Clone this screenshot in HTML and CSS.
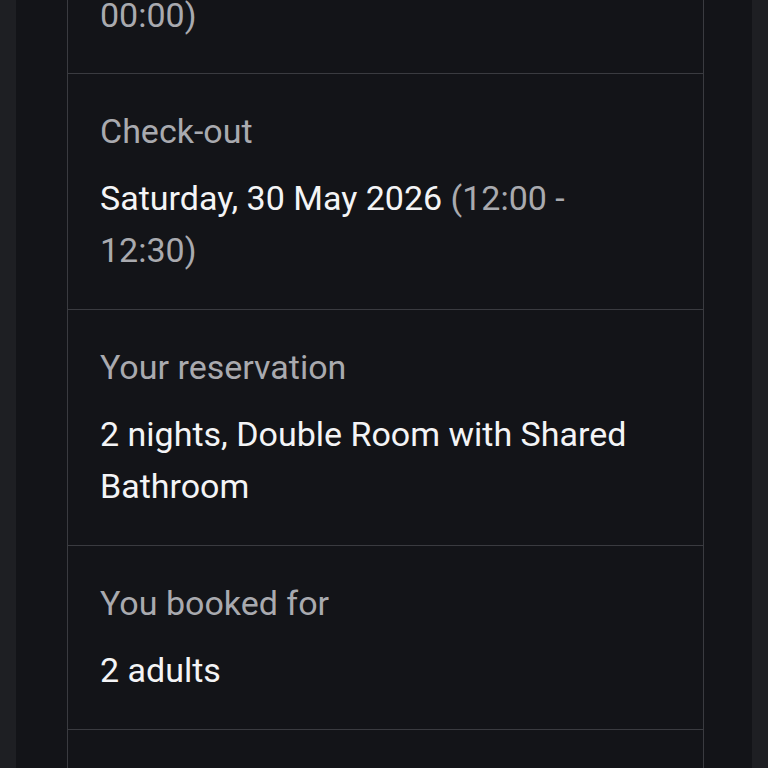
FILE: index.html
```html
<!DOCTYPE html>
<html lang="en">
<head>
    <meta charset="UTF-8">
    <meta name="viewport" content="width=device-width, initial-scale=1.0">
    <title>Booking details</title>
    <link rel="stylesheet" href="styles.css">
</head>
<body>
    <div class="panel">
        <div class="details">
            <div class="row row-partial">
                <div class="value"><span class="muted">00:00)</span></div>
            </div>

            <div class="row">
                <div class="label">Check-out</div>
                <div class="value">Saturday, 30 May 2026 <span class="muted">(12:00 - 12:30)</span></div>
            </div>

            <div class="row">
                <div class="label">Your reservation</div>
                <div class="value">2 nights, Double Room with Shared Bathroom</div>
            </div>

            <div class="row">
                <div class="label">You booked for</div>
                <div class="value">2 adults</div>
            </div>

            <div class="row row-empty"></div>
        </div>
    </div>
</body>
</html>
```

FILE: styles.css
```css
html, body {
    margin: 0;
    height: 100%;
    background-color: #1e1f23;
    overflow: hidden;
}
body {
    font-family: Roboto, "Noto Sans", Arial, sans-serif;
    padding: 0 16px;
}
.panel {
    background-color: #131418;
    min-height: 100%;
    padding: 0 48px 0 51px;
}
.details {
    border-left: 1px solid #3a3b40;
    border-right: 1px solid #3a3b40;
    margin-top: -11px;
}
.row {
    padding: 31px 40px 33px 32px;
    border-top: 1px solid #3a3b40;
}
.row-partial {
    padding-top: 0;
    padding-bottom: 32px;
    border-top: none;
}
.row-empty {
    height: 120px;
}
.label {
    color: #a9aaaf;
    font-size: 34px;
    line-height: 52px;
    margin-bottom: 15px;
}
.value {
    color: #f4f4f6;
    font-size: 34px;
    line-height: 52px;
}
.muted {
    color: #a9aaaf;
}
```
